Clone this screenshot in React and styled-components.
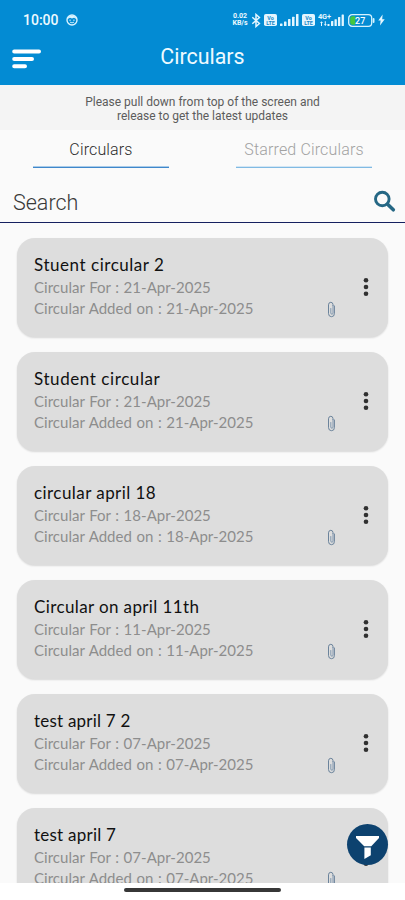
import styled, { createGlobalStyle } from "styled-components"

const GlobalStyle = createGlobalStyle`
* {
  box-sizing: border-box;
}

body {
  margin: 0;
  background: #ffffff;
  font-family: Roboto, sans-serif;
}
`

const Screen = styled.div`
position: relative;
display: flex;
flex-direction: column;
width: 405px;
height: 900px;
overflow: hidden;
background: #fafafa;
`

const TopBar = styled.header`
flex: none;
height: 85px;
background: #038bd3;
color: #eefaff;
`

const StatusBar = styled.div`
display: flex;
align-items: center;
justify-content: space-between;
height: 40px;
padding: 0 20px 0 23px;
`

const StatusGroup = styled.div`
display: flex;
align-items: center;
gap: ${(props) => props.$gap}px;
`

const Clock = styled.span`
font-size: 14px;
font-weight: 500;
line-height: 16px;
`

const NetSpeed = styled.span`
width: 16px;
font-size: 7px;
font-weight: 700;
line-height: 7px;
text-align: center;
white-space: nowrap;
`

const TitleRow = styled.div`
display: grid;
grid-template-columns: 60px 1fr 60px;
align-items: center;
height: 36px;
padding-left: 12px;
padding-right: 12px;
`

const MenuButton = styled.button`
display: flex;
width: 29px;
height: 20px;
margin-top: 2px;
padding: 0;
border: 0;
background: none;
`

const PageTitle = styled.h1`
margin: 0 0 3px;
font-size: 21.4px;
font-weight: 400;
line-height: 30px;
text-align: center;
`

const Notice = styled.p`
flex: none;
height: 45px;
margin: 0;
padding-top: 10px;
background: #f4f4f4;
color: #5c5c5c;
font-size: 12px;
line-height: 14.4px;
text-align: center;
`

const Tabs = styled.nav`
display: grid;
flex: none;
grid-template-columns: 136px 136px;
justify-content: space-between;
height: 38px;
padding: 0 33px;
`

const Tab = styled.div`
height: 38px;
padding-top: 10px;
border-bottom: 1px solid ${(props) => (props.$active ? "#3f87cb" : "#80bae3")};
box-shadow: inset 0 -1px 0 ${(props) => (props.$active ? "#a9cbe8" : "#d3e6f4")};
color: ${(props) => (props.$active ? "#2c2c2c" : "#a2a2a2")};
font-size: 16px;
font-weight: 300;
line-height: 20px;
letter-spacing: 0.15px;
text-align: center;
white-space: nowrap;
`

const SearchRow = styled.div`
display: flex;
flex: none;
align-items: flex-end;
justify-content: space-between;
height: 55px;
padding: 0 9px 5px 13px;
border-bottom: 1px solid #15205f;
color: #383838;
font-size: 21.5px;
font-weight: 300;
line-height: 28px;
`

const SearchIcon = styled.svg`
width: 23px;
height: 23px;
margin-bottom: 4px;
`

const List = styled.main`
display: flex;
flex: 1;
flex-direction: column;
gap: 15px;
min-height: 0;
padding: 15px 17px 0;
overflow: hidden;
`

const Card = styled.article`
display: grid;
flex: none;
grid-template-columns: 1fr 11px 24px 12px;
height: 99px;
padding: 16px 14px 0 17px;
border-radius: 18px;
background: #dddddd;
box-shadow: 0 1px 2px rgba(0, 0, 0, 0.14);
font-family: Lato, sans-serif;
`

const CardTitle = styled.h2`
margin: 0 0 1px;
color: #111111;
font-size: 17px;
font-weight: 400;
line-height: 22px;
letter-spacing: ${(props) => props.$spacing}px;
white-space: nowrap;
`

const CardLine = styled.p`
margin: 0;
color: #8d8d8d;
font-size: 15px;
line-height: 21px;
letter-spacing: 0.02px;
word-spacing: 0.7px;
white-space: nowrap;
`

const ClipIcon = styled.svg`
width: 9px;
height: 17px;
margin-top: 47px;
`

const MoreIcon = styled.svg`
grid-column: 4;
width: 8px;
height: 20px;
margin-top: 23px;
`

const FilterButton = styled.button`
position: absolute;
right: 17px;
bottom: 35px;
display: flex;
width: 41px;
height: 41px;
padding: 0;
border: 0;
border-radius: 50%;
background: #0d426f;
`

const GestureArea = styled.footer`
display: flex;
flex: none;
justify-content: center;
height: 17px;
padding-top: 5px;
background: #ffffff;
`

const GestureBar = styled.div`
width: 157px;
height: 4px;
border-radius: 2px;
background: #373737;
`

const circulars = [
  { title: "Stuent circular 2", date: "21-Apr-2025", spacing: 0.54 },
  { title: "Student circular", date: "21-Apr-2025", spacing: 0.58 },
  { title: "circular april 18", date: "18-Apr-2025", spacing: 0.44 },
  { title: "Circular on april 11th", date: "11-Apr-2025", spacing: 0.38 },
  { title: "test april 7 2", date: "07-Apr-2025", spacing: 0.22 },
  { title: "test april 7", date: "07-Apr-2025", spacing: 0.24 },
]

const FaceIcon = () => (
  <svg width="12" height="12" viewBox="0 0 12 12" fill="none" stroke="#d9f3ff">
    <circle cx="6" cy="6" r="5" strokeWidth="1.4" />
    <path d="M1.6 5Q2 1.4 6 1.4Q10 1.4 10.4 5L8 3.8L6 4.5L4 3.8Z" fill="#d9f3ff" stroke="none" />
    <path d="M3.3 6.2h1.6M7.1 6.2h1.6M4 8.2q2 1.2 4 0" strokeWidth="0.9" />
  </svg>
)

const BluetoothIcon = () => (
  <svg width="10" height="15" viewBox="0 0 10 15" fill="none" stroke="#e4f6ff" strokeWidth="1.5">
    <path d="M1.3 4.3L8.4 10.5L5 13.5V1.5L8.4 4.5L1.3 10.7" />
  </svg>
)

const VolteIcon = () => (
  <svg width="13" height="12" viewBox="0 0 13 12">
    <rect width="13" height="12" rx="1.8" fill="#e4f6ff" />
    <text x="6.5" y="5.6" textAnchor="middle" fontSize="5.4" fontWeight="700" fill="#1687c6">Vo</text>
    <text x="6.5" y="10.8" textAnchor="middle" fontSize="5.4" fontWeight="700" fill="#1687c6">LTE</text>
  </svg>
)

const SignalIcon = () => (
  <svg width="19" height="12" viewBox="0 0 19 12" fill="#e4f6ff">
    <rect x="0" y="9.5" width="2.5" height="2.5" rx="0.6" />
    <rect x="4" y="7.5" width="2.5" height="4.5" rx="0.6" />
    <rect x="8" y="5" width="2.5" height="7" rx="0.6" />
    <rect x="12" y="2.7" width="2.5" height="9.3" rx="0.6" />
    <rect x="16" y="0" width="2.5" height="12" rx="0.6" />
  </svg>
)

const MobileDataIcon = () => (
  <svg width="27" height="14" viewBox="0 0 27 14" fill="#e4f6ff">
    <text x="0" y="6" fontSize="7.4" fontWeight="700" textLength="13">4G+</text>
    <path d="M3.5 8.2L5 10H4V13H3V10H2ZM7.3 13L5.8 11.2H6.8V8.2H7.8V11.2H8.8Z" />
    <rect x="9.5" y="11" width="2" height="2" />
    <rect x="13" y="8" width="2.3" height="5" rx="0.5" />
    <rect x="16.5" y="6.3" width="2.3" height="6.7" rx="0.5" />
    <rect x="20" y="4" width="2.3" height="9" rx="0.5" />
    <rect x="23.6" y="1.5" width="2.3" height="11.5" rx="0.5" />
  </svg>
)

const BatteryIcon = () => (
  <svg width="27" height="13" viewBox="0 0 27 13">
    <rect x="0.7" y="0.7" width="23" height="11.6" rx="3.4" fill="none" stroke="#d5f3ff" strokeWidth="1.3" />
    <path d="M4.2 2.3H7.2V10.7H4.2Q2.2 10.7 2.2 8.7V4.3Q2.2 2.3 4.2 2.3Z" fill="#43c63e" />
    <rect x="24.7" y="4" width="1.8" height="5" rx="0.9" fill="#d5f3ff" />
    <text x="12.2" y="9.7" textAnchor="middle" fontSize="9" fontWeight="500" fill="#ffffff">27</text>
  </svg>
)

const BoltIcon = () => (
  <svg width="7" height="12" viewBox="0 0 7 12">
    <path d="M4.6 0.5L0.3 6.4H2.6L2 11.5L6.7 5.2H4.2Z" fill="#e4f6ff" />
  </svg>
)

const MenuIcon = () => (
  <svg width="29" height="20" viewBox="0 0 29 20" stroke="#ffffff" strokeWidth="4" strokeLinecap="round">
    <path d="M2.2 2.6H27M2.2 9.9H20M2.2 17.2H13" />
  </svg>
)

const CircularCard = ({ title, date, spacing }) => (
  <Card>
    <div>
      <CardTitle $spacing={spacing}>{title}</CardTitle>
      <CardLine>Circular For : {date}</CardLine>
      <CardLine>Circular Added on : {date}</CardLine>
    </div>
    <ClipIcon viewBox="0 0 9 17" fill="none" strokeLinecap="round">
      <path d="M6 4.5V3.6Q5.9 1.3 3.8 1.3Q1.6 1.3 1.5 3.8V12.6Q1.6 15.7 4.5 15.7Q7.4 15.7 7.4 12.6V5" stroke="#5e7893" strokeWidth="0.9" />
      <path d="M6 4.5V12.2Q5.8 13.3 4.9 13.3Q3.9 13.2 3.8 12V7.5" stroke="#6a86a3" strokeWidth="0.8" />
    </ClipIcon>
    <MoreIcon viewBox="0 0 8 20" fill="#303030">
      <circle cx="4" cy="3.3" r="2.3" />
      <circle cx="4" cy="10" r="2.3" />
      <circle cx="4" cy="16.7" r="2.3" />
    </MoreIcon>
  </Card>
)

const App = () => {
  return (
    <>
      <GlobalStyle />
      <Screen>
        <TopBar>
          <StatusBar>
            <StatusGroup $gap={7}>
              <Clock>10:00</Clock>
              <FaceIcon />
            </StatusGroup>
            <StatusGroup $gap={3}>
              <NetSpeed>
                0.02
                <br />
                KB/s
              </NetSpeed>
              <BluetoothIcon />
              <VolteIcon />
              <SignalIcon />
              <VolteIcon />
              <MobileDataIcon />
              <BatteryIcon />
              <BoltIcon />
            </StatusGroup>
          </StatusBar>
          <TitleRow>
            <MenuButton aria-label="Menu">
              <MenuIcon />
            </MenuButton>
            <PageTitle>Circulars</PageTitle>
          </TitleRow>
        </TopBar>

        <Notice>
          Please pull down from top of the screen and
          <br />
          release to get the latest updates
        </Notice>

        <Tabs>
          <Tab $active>Circulars</Tab>
          <Tab>Starred Circulars</Tab>
        </Tabs>

        <SearchRow>
          <span>Search</span>
          <SearchIcon viewBox="0 0 23 23" fill="none" stroke="#256784" strokeLinecap="round">
            <circle cx="9.3" cy="9" r="6.8" strokeWidth="2.9" />
            <path d="M14.6 14.3L20.3 19.8" strokeWidth="3.6" />
          </SearchIcon>
        </SearchRow>

        <List>
          {circulars.map((item) => (
            <CircularCard key={item.title} {...item} />
          ))}
        </List>

        <FilterButton aria-label="Filter">
          <svg width="41" height="41" viewBox="0 0 41 41" fill="#ffffff">
            <path d="M9 12H32V14L24.3 22.3H17.2L9 14Z" />
            <path d="M17.4 23.5H23.8V31.3L17.4 35Z" />
          </svg>
        </FilterButton>

        <GestureArea>
          <GestureBar />
        </GestureArea>
      </Screen>
    </>
  )
}

export default App
